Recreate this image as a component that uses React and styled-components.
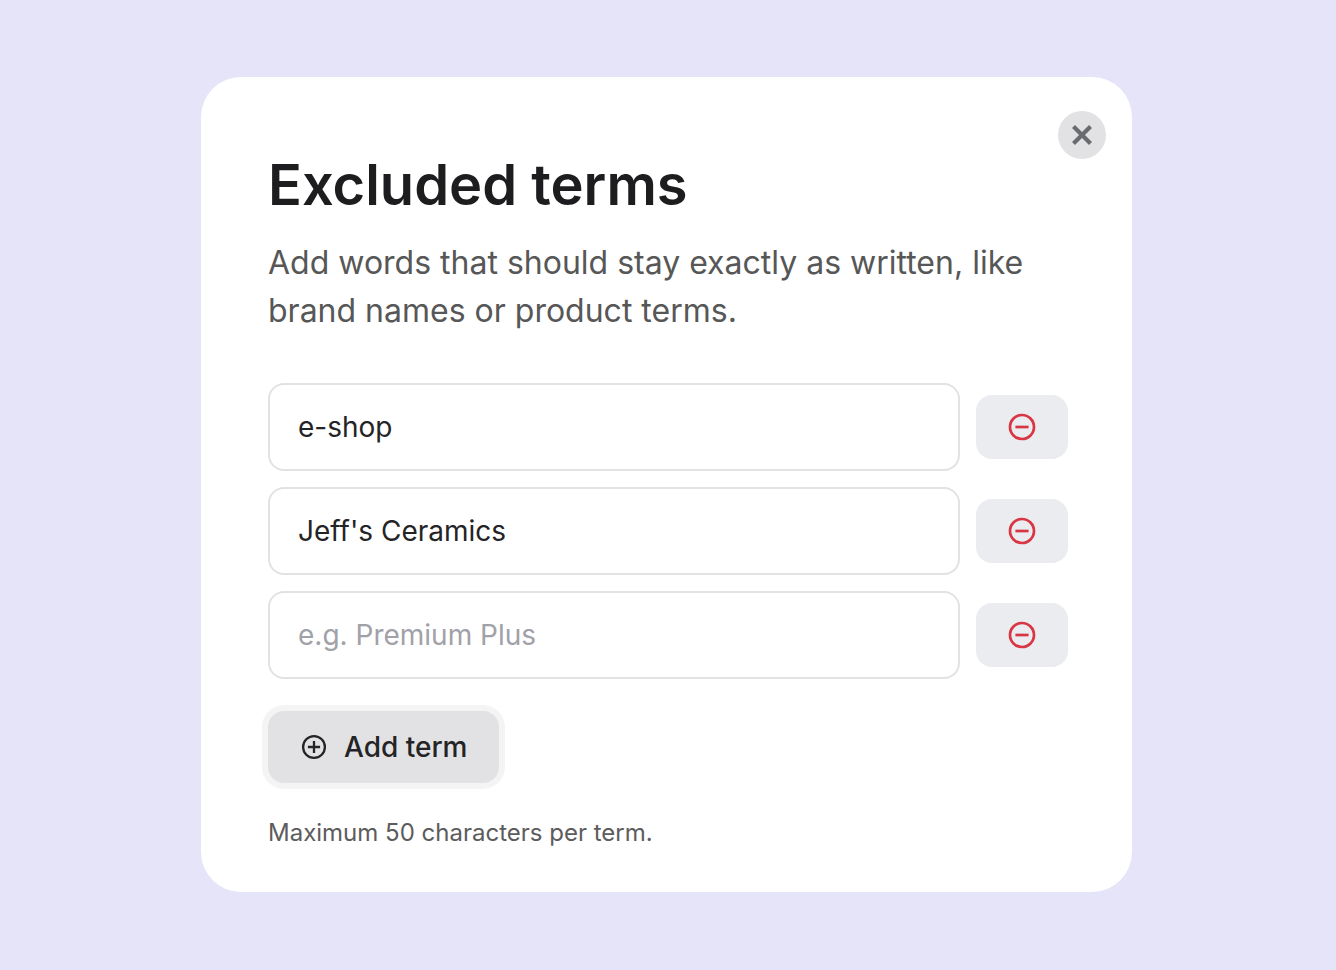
import React from "react";
import styled, { createGlobalStyle } from "styled-components";

const GlobalStyle = createGlobalStyle`
  *, *::before, *::after { box-sizing: border-box; }
  body {
    margin: 0;
    background: #e6e4f9;
    font-family: Inter, "Liberation Sans", sans-serif;
    color: #1d1d1f;
  }
`;

const Page = styled.main`
  min-height: 100vh;
  display: flex;
  align-items: center;
  justify-content: center;
  padding: 32px 35px 33px 32px;
`;

const Dialog = styled.section`
  position: relative;
  width: 100%;
  max-width: 931px;
  padding: 76px 64px 41px 67px;
  border-radius: 40px;
  background: #ffffff;
`;

const CloseButton = styled.button`
  position: absolute;
  top: 34px;
  right: 26px;
  width: 48px;
  height: 48px;
  display: grid;
  place-items: center;
  padding: 0;
  border: 0;
  border-radius: 50%;
  background: #e2e2e5;
  color: #6a6b70;
  cursor: pointer;
`;

const Title = styled.h1`
  margin: 0 0 22px;
  font-size: 56px;
  line-height: 64px;
  font-weight: 600;
`;

const Description = styled.p`
  margin: 0 0 48px;
  font-size: 32px;
  line-height: 48px;
  color: #575757;
`;

const TermList = styled.ul`
  margin: 0 0 32px;
  padding: 0;
  list-style: none;
  display: flex;
  flex-direction: column;
  gap: 16px;
`;

const TermRow = styled.li`
  display: flex;
  align-items: center;
  gap: 16px;
`;

const TermInput = styled.input`
  flex: 1;
  min-width: 0;
  height: 88px;
  padding: 0 28px;
  border: 2px solid #e2e2e4;
  border-radius: 16px;
  background: #ffffff;
  font: inherit;
  font-size: 28px;
  color: #242426;
  outline: none;
  &::placeholder { color: #a1a1a8; opacity: 1; }
`;

const RemoveButton = styled.button`
  width: 92px;
  height: 64px;
  display: grid;
  place-items: center;
  padding: 0;
  border: 0;
  border-radius: 16px;
  background: #ebecf0;
  color: #d93644;
  cursor: pointer;
`;

const AddButton = styled.button`
  display: flex;
  align-items: center;
  gap: 16px;
  height: 72px;
  padding: 0 32px;
  border: 0;
  border-radius: 16px;
  background: #e2e2e4;
  box-shadow: 0 0 0 6px #f4f4f5;
  font: inherit;
  font-size: 28px;
  font-weight: 500;
  color: #242426;
  cursor: pointer;
`;

const Hint = styled.p`
  margin: 32px 0 0;
  font-size: 24px;
  line-height: 36px;
  color: #5c5c5c;
`;

const terms = [{ value: "e-shop" }, { value: "Jeff's Ceramics" }, { value: "" }];

export default function App() {
  return (
    <Page>
      <GlobalStyle />
      <Dialog role="dialog" aria-labelledby="title" aria-describedby="description">
        <CloseButton type="button" aria-label="Close">
          <svg width="24" height="24" viewBox="0 0 24 24" fill="none" stroke="currentColor" strokeWidth="4.2">
            <path d="M3.5 3.5 20.5 20.5M20.5 3.5 3.5 20.5" />
          </svg>
        </CloseButton>
        <Title id="title">Excluded terms</Title>
        <Description id="description">
          Add words that should stay exactly as written, like brand names or product terms.
        </Description>
        <TermList>
          {terms.map((term, index) => (
            <TermRow key={index}>
              <TermInput
                type="text"
                aria-label={`Term ${index + 1}`}
                aria-describedby="hint"
                maxLength={50}
                defaultValue={term.value}
                placeholder="e.g. Premium Plus"
              />
              <RemoveButton type="button" aria-label={`Remove term ${index + 1}`}>
                <svg width="28" height="28" viewBox="0 0 28 28" fill="none" stroke="currentColor" strokeWidth="2.7">
                  <circle cx="14" cy="14" r="12" />
                  <path d="M7.4 14h13.2" />
                </svg>
              </RemoveButton>
            </TermRow>
          ))}
        </TermList>
        <AddButton type="button">
          <svg width="28" height="28" viewBox="0 0 28 28" fill="none" stroke="currentColor" strokeWidth="2.3">
            <circle cx="14" cy="14" r="10.9" />
            <path d="M7.9 14h12.2M14 7.9v12.2" />
          </svg>
          Add term
        </AddButton>
        <Hint id="hint">Maximum 50 characters per term.</Hint>
      </Dialog>
    </Page>
  );
}
